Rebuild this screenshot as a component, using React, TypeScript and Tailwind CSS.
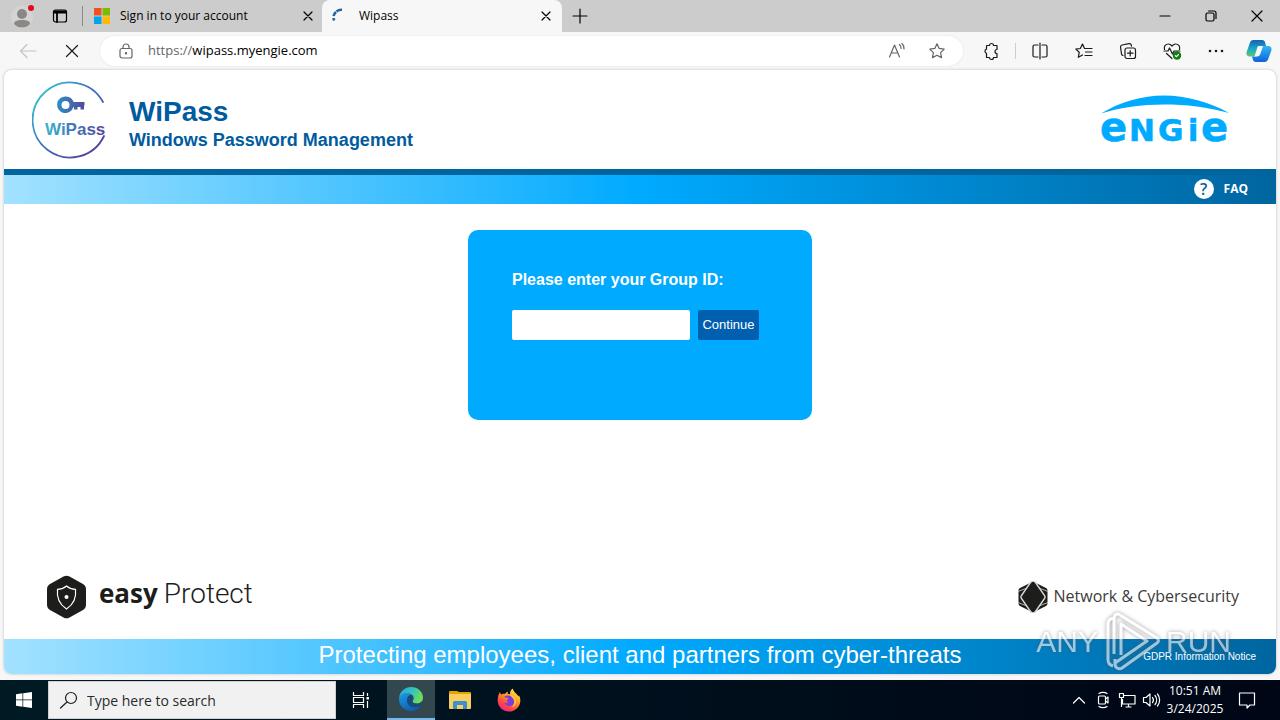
import React, { useState } from "react";

const chromeFont = "font-['Open_Sans',sans-serif]";

interface IconProps {
  size?: number;
  children: React.ReactNode;
}

// 20px line icon used in the browser toolbar
function LineIcon({ size = 20, children }: IconProps) {
  return (
    <svg
      width={size}
      height={size}
      viewBox="0 0 20 20"
      fill="none"
      stroke="currentColor"
      strokeWidth="1.2"
      strokeLinecap="round"
      strokeLinejoin="round"
    >
      {children}
    </svg>
  );
}

function CloseSvg({ size = 20 }: { size?: number }) {
  return (
    <LineIcon size={size}>
      <path d="M6 6l8 8M14 6l-8 8" />
    </LineIcon>
  );
}

function ProfileSvg() {
  return (
    <svg width="28" height="28" viewBox="0 0 28 28">
      <circle cx="14" cy="15" r="11" fill="#d6d4d2" />
      <circle cx="14" cy="12" r="5" fill="#8a8886" />
      <path d="M6 22c0-3 3-4 8-4s8 1 8 4c-2 2.500-5 3.500-8 3.500s-6-1-8-3.500z" fill="#8a8886" />
      <circle cx="23" cy="6" r="3" fill="#e00b1c" />
    </svg>
  );
}

function MicrosoftSvg() {
  return (
    <svg width="16" height="16" viewBox="0 0 16 16">
      <path d="M0 0h7.500v7.500H0z" fill="#f25022" />
      <path d="M8.500 0H16v7.500H8.500z" fill="#7fba00" />
      <path d="M0 8.500h7.500V16H0z" fill="#00a4ef" />
      <path d="M8.500 8.500H16V16H8.500z" fill="#ffb900" />
    </svg>
  );
}

function CopilotSvg() {
  return (
    <svg width="26" height="24" viewBox="0 0 26 24">
      <defs>
        <linearGradient id="cpA" x1="0" y1="0" x2="0" y2="1">
          <stop offset="0" stopColor="#1660b4" />
          <stop offset="0.500" stopColor="#18a5c9" />
          <stop offset="1" stopColor="#5cc878" />
        </linearGradient>
        <linearGradient id="cpB" x1="0" y1="0" x2="0" y2="1">
          <stop offset="0" stopColor="#33b6f2" />
          <stop offset="0.600" stopColor="#1b86ea" />
          <stop offset="1" stopColor="#0f62d8" />
        </linearGradient>
      </defs>
      <path d="M7.500 1h8.500c1.800 0 2.800 1 3.200 2.800L20 7h-3.500c-2 0-3 1-3.500 3l-2 5c-.6 1.800-1.500 2.500-3.500 2.500H4c-3.500 0-4-2.500-3.200-5L4 3.500C4.600 1.800 6 1 7.500 1z" fill="url(#cpA)" />
      <path d="M18.500 23H10c-1.800 0-2.800-1-3.200-2.800L6 17.500h2.500c2 0 3-1 3.500-2.500l2-5.500c.6-1.800 1.500-2.500 3.500-2.500H22c3.500 0 4 2.500 3.200 5L22 20.500c-.6 1.700-2 2.500-3.500 2.500z" fill="url(#cpB)" />
      <path d="M12.500 7h4.500l-2.500 7.500c-.7 2-1.500 3-3.500 3H8.500L11 9.500C11.300 8.200 11.700 7 12.500 7z" fill="#f7f7f7" />
    </svg>
  );
}

function TabStrip() {
  return (
    <div className="flex h-8 items-center bg-[#cccccc] text-black">
      <button aria-label="Profile" className="ml-2">
        <ProfileSvg />
      </button>
      <button aria-label="Tab actions" className="ml-3.5 mr-3">
        <LineIcon>
          <rect x="3.500" y="4" width="13" height="12" rx="2" />
          <path d="M4 5.500h12M4 6.500h12M7 7v9" strokeWidth="1.800" />
        </LineIcon>
      </button>
      <span className="h-5 w-px bg-[#8a8a8a]" />
      <div className="flex h-8 w-[239px] items-center pl-[11px] pr-1">
        <MicrosoftSvg />
        <span className="ml-2.5 flex-1 text-[12px]">Sign in to your account</span>
        <button aria-label="Close tab">
          <CloseSvg />
        </button>
      </div>
      <div className="flex h-8 w-60 items-center rounded-t-lg bg-[#f7f7f7] pl-[9px] pr-1.5">
        <svg width="16" height="16" viewBox="0 0 16 16" fill="none" stroke="#1d66a8" strokeWidth="2.600">
          <path d="M3.200 12.500a7 7 0 0 1-.6-2.500" />
          <path d="M2.600 8A7 7 0 0 1 5 4" />
          <path d="M5.500 3.500A8 8 0 0 1 11 1.800" />
        </svg>
        <span className="ml-3 flex-1 text-[12px]">Wipass</span>
        <button aria-label="Close tab">
          <CloseSvg />
        </button>
      </div>
      <button aria-label="New tab" className="ml-2">
        <LineIcon>
          <path d="M10 3v14M3 10h14" />
        </LineIcon>
      </button>
      <div className="ml-auto flex">
        <button aria-label="Minimize" className="flex w-[46px] justify-center">
          <LineIcon>
            <path d="M5 10h10" />
          </LineIcon>
        </button>
        <button aria-label="Restore" className="flex w-[46px] justify-center">
          <LineIcon>
            <rect x="5" y="7" width="8" height="8" rx="1.500" />
            <path d="M7.500 5h5.500a2 2 0 0 1 2 2v5.500" />
          </LineIcon>
        </button>
        <button aria-label="Close window" className="flex w-[46px] justify-center">
          <LineIcon>
            <path d="M5 5l10 10M15 5L5 15" />
          </LineIcon>
        </button>
      </div>
    </div>
  );
}

const starPath =
  "M10 2.800l2.200 4.600 5 .7-3.600 3.500.9 5-4.500-2.400-4.500 2.400.9-5L2.800 8.100l5-.7z";

function Toolbar() {
  return (
    <div className="flex h-[38px] items-center text-[#1a1a1a]">
      <button aria-label="Back" className="ml-[18px] text-[#c4c4c4]">
        <LineIcon>
          <path d="M18 10H2.500M9 3.500L2.500 10 9 16.500" />
        </LineIcon>
      </button>
      <button aria-label="Stop" className="ml-6">
        <LineIcon>
          <path d="M4.500 4.500l11 11M15.500 4.500l-11 11" />
        </LineIcon>
      </button>
      <div className="ml-[18px] flex h-[30px] flex-1 items-center rounded-full bg-white px-4 text-[#666666] shadow-[0_0_2px_#dddddd]">
        <LineIcon>
          <rect x="4" y="7.500" width="12" height="9.500" rx="2" />
          <path d="M7 7.500V6a3 3 0 0 1 6 0v1.500" />
          <circle cx="10" cy="12.200" r="0.600" fill="currentColor" />
        </LineIcon>
        <div role="textbox" aria-label="Address" className="ml-3 flex-1 text-[13px]">
          https://<span className="text-black">wipass.myengie.com</span>
        </div>
        <button aria-label="Read aloud" className="mr-5">
          <LineIcon>
            <path d="M2.500 16L7.500 4l5 12M4.200 12h6.600" />
            <path d="M12.500 3.500a5 5 0 0 1 1.500 4M15 2.500a7 7 0 0 1 2 5.500" />
          </LineIcon>
        </button>
        <button aria-label="Add to favorites">
          <LineIcon>
            <path d={starPath} />
          </LineIcon>
        </button>
      </div>
      <button aria-label="Extensions" className="ml-[18px]">
        <LineIcon>
          <path d="M6 4.500h2.500a2 2 0 0 1 4 0H16v4a2 2 0 0 0 0 4v4h-3.500a2 2 0 0 1-4 0H5.500v-4.200a2.200 2.200 0 0 1 0-4.200V5z" />
        </LineIcon>
      </button>
      <span className="ml-3.5 h-4 w-px bg-[#cccccc]" />
      <div className="ml-3.5 flex gap-6">
        <button aria-label="Split screen">
          <LineIcon>
            <path d="M8 4H4.500A1.500 1.500 0 0 0 3 5.500v9A1.500 1.500 0 0 0 4.500 16H8M12 4h3.500A1.500 1.500 0 0 1 17 5.500v9a1.500 1.500 0 0 1-1.500 1.500H12M10 2v16" />
          </LineIcon>
        </button>
        <button aria-label="Favorites">
          <LineIcon>
            <path d="M10.500 7.500L8.500 3 6.300 7.500l-4.500.6 3.400 3.200-.9 5L8.500 14M11 7.500h7M11.500 11H18M11 14.500h7" />
          </LineIcon>
        </button>
        <button aria-label="Collections">
          <LineIcon>
            <path d="M5 14.500a2 2 0 0 1-1.500-1.500l-1-7A2 2 0 0 1 4 4l7-1.300a2 2 0 0 1 2.300 1.500l.2 1" />
            <rect x="7" y="7" width="10.500" height="10.500" rx="2" />
            <path d="M12.200 9.500v5.500M9.500 12.200H15" />
          </LineIcon>
        </button>
        <button aria-label="Browser essentials">
          <LineIcon>
            <path d="M2.500 8.500C1.500 5 4 3 6.500 3 8.500 3 9.500 4.500 10 5c.5-.5 1.500-2 3.500-2C16 3 18.500 5 17.500 8.500M2 10h4l1.500-3 3 6L12 10h6M4.500 12.500L10 17.500" />
            <circle cx="15" cy="14.500" r="3.600" fill="#107c10" stroke="#107c10" />
            <path d="M13.400 14.700l1.100 1 2-2.200" stroke="#ffffff" />
          </LineIcon>
        </button>
        <button aria-label="Settings and more">
          <LineIcon>
            <g fill="currentColor" stroke="none">
              <circle cx="4" cy="10" r="1.300" />
              <circle cx="10" cy="10" r="1.300" />
              <circle cx="16" cy="10" r="1.300" />
            </g>
          </LineIcon>
        </button>
      </div>
      <button aria-label="Copilot" className="ml-5 mr-2">
        <CopilotSvg />
      </button>
    </div>
  );
}

function WiPassLogo() {
  return (
    <svg width="78" height="78" viewBox="0 0 78 78">
      <defs>
        <linearGradient id="wp" gradientUnits="userSpaceOnUse" x1="8" y1="8" x2="70" y2="60">
          <stop offset="0" stopColor="#35c3cf" />
          <stop offset="0.450" stopColor="#3f74c0" />
          <stop offset="1" stopColor="#52439a" />
        </linearGradient>
        <linearGradient id="wpKey" x1="0" y1="0" x2="1" y2="0">
          <stop offset="0" stopColor="#2a8fc4" />
          <stop offset="1" stopColor="#564a9c" />
        </linearGradient>
        <linearGradient id="wpText" x1="0" y1="0" x2="1" y2="0">
          <stop offset="0" stopColor="#38b6cf" />
          <stop offset="0.450" stopColor="#4079bd" />
          <stop offset="1" stopColor="#57479b" />
        </linearGradient>
      </defs>
      <path d="M71 21A37.500 37.500 0 1 0 72 55" fill="none" stroke="url(#wp)" strokeWidth="1.800" strokeLinecap="round" />
      <path
        fillRule="evenodd"
        fill="url(#wpKey)"
        d="M34 15.500a8.300 8.300 0 0 1 7.600 5.500H52.500v3.500h-.5v4h-3.500v-2.500h-3v2.500h-3.500v-2.500h-.6A8.300 8.300 0 1 1 34 15.500zM33.500 20a4 4 0 1 0 0 8 4 4 0 0 0 0-8z"
      />
      <text x="13" y="54" fill="url(#wpText)" fontSize="17" fontWeight="bold" fontFamily="Liberation Sans, sans-serif">
        WiPass
      </text>
    </svg>
  );
}

function EngieLogo() {
  return (
    <svg
      width="130"
      height="60"
      viewBox="0 -5 130 60"
      fill="#00aaff"
      className="overflow-visible"
    >
      <path d="M1 18.500C20 7 42 0.500 64 0.500s46 6.500 65 17.500C108 12 86 9.500 64 9.500S20 12.500 1 18.500z" />
      <text y="46" fontFamily="DejaVu Sans, sans-serif" fontWeight="bold" stroke="#00aaff" strokeWidth="0.600">
        <tspan x="0" fontSize="40">e</tspan>
        <tspan x="29" fontSize="31">N</tspan>
        <tspan x="58" fontSize="31">G</tspan>
        <tspan x="88" fontSize="30">i</tspan>
        <tspan x="101" fontSize="40">e</tspan>
      </text>
    </svg>
  );
}

function Header() {
  return (
    <header>
      <div className="flex h-[99px] items-center justify-between pl-7 pr-[46px]">
        <div className="flex items-center gap-[19px]">
          <WiPassLogo />
          <div className="pt-2 font-bold text-[#005b9f]">
            <h1 className="text-[28px] leading-8">WiPass</h1>
            <h2 className="text-[18px] leading-6">Windows Password Management</h2>
          </div>
        </div>
        <EngieLogo />
      </div>
      <nav className="flex h-[35px] items-center justify-end border-t-6 border-[#00659f] bg-linear-to-r/srgb from-[#a3e2ff] via-[#00aaff] to-[#00659f] pr-7 pb-0.5">
        <a href="#faq" className="flex items-center gap-2.5 font-['Open_Sans',sans-serif] text-[12px] font-bold text-white">
          <span className="flex size-5 items-center justify-center rounded-full bg-white text-[16px] leading-5 font-semibold text-[#00659f]">
            ?
          </span>
          FAQ
        </a>
      </nav>
    </header>
  );
}

function GroupForm() {
  const [groupId, setGroupId] = useState<string>("");

  return (
    <form
      onSubmit={(e) => e.preventDefault()}
      className="mx-auto mt-[26px] h-[190px] w-[344px] rounded-[10px] bg-[#00aaff] px-11 pt-10"
    >
      <label htmlFor="groupId" className="block text-[16px] leading-5 font-bold text-white">
        Please enter your Group ID:
      </label>
      <div className="mt-5 flex gap-2">
        <input
          id="groupId"
          type="text"
          value={groupId}
          onChange={(e) => setGroupId(e.target.value)}
          className="h-[30px] w-[178px] rounded-xs bg-white px-2 text-[13px] outline-none"
        />
        <button type="submit" className="h-[30px] w-[61px] rounded-xs bg-[#005fae] text-[13px] text-white">
          Continue
        </button>
      </div>
    </form>
  );
}

function Partners() {
  return (
    <div className="mt-auto mb-5 flex items-center justify-between pl-[42px] pr-[37px] text-[#1d1d1b]">
      <div className="flex items-center gap-3">
        <svg width="41" height="44" viewBox="0 0 41 44">
          <path d="M17.500 1.600a6 6 0 0 1 6 0l13.500 7.400a6 6 0 0 1 3 5.200v15.600a6 6 0 0 1-3 5.200l-13.500 7.400a6 6 0 0 1-6 0L4 35a6 6 0 0 1-3-5.200V14.200A6 6 0 0 1 4 9z" fill="#1d1d1b" />
          <path d="M20.500 11c2.500 2.200 5.500 3.200 9 3.400 1 8-2 15-9 19.600-7-4.600-10-11.600-9-19.600 3.500-.2 6.500-1.200 9-3.400z" fill="none" stroke="#ffffff" strokeWidth="1.200" />
          <circle cx="20.500" cy="22" r="2" fill="#ffffff" />
        </svg>
        <p className="flex items-baseline gap-1.5 pb-2 leading-8">
          <span className="font-['Open_Sans',sans-serif] text-[26px] font-bold">easy</span>
          <span className="font-['Roboto',sans-serif] text-[28px] font-light">Protect</span>
        </p>
      </div>
      <div className="flex items-center gap-1.5">
        <svg width="30" height="32" viewBox="0 0 30 32">
          <path d="M15 0.500L28 7a3 3 0 0 1 1.500 2.600v12.800A3 3 0 0 1 28 25l-13 6.500L2 25a3 3 0 0 1-1.500-2.600V9.600A3 3 0 0 1 2 7z" fill="#1d1d1b" />
          <path d="M13.500 0L3.500 14.500a2.500 2.500 0 0 0 0 3L13.500 32M16.500 0l10 14.500a2.500 2.500 0 0 1 0 3L16.500 32" fill="none" stroke="#d8d8d8" strokeWidth="1.400" />
          <path d="M0 10.500L9 7M30 10.500L21 7M0 21.500L9 25M30 21.500L21 25" stroke="#d8d8d8" strokeWidth="0.800" />
        </svg>
        <p className="pb-0.5 font-['Open_Sans',sans-serif] text-[16px] leading-6 text-[#3c3c3b]">
          Network &amp; Cybersecurity
        </p>
      </div>
    </div>
  );
}

// recorder watermark laid over the lower right corner
function Watermark() {
  return (
    <div className="pointer-events-none absolute right-[45px] bottom-0 flex items-center gap-1.5 text-[30px] leading-[48px] text-white opacity-60 drop-shadow-[0_0_2px_#555555]">
      <span>ANY</span>
      <svg width="56" height="64" viewBox="2 0 56 64" fill="none" stroke="#ffffff" strokeWidth="3" strokeLinejoin="round">
        <path d="M18 5l37 23c2 1.500 2 3.500 0 5L20 58c-3 2-7 0-7-4v-5" />
        <path d="M11 8c-3 1-5 3-5 6v36c0 3 2 5 5 6" />
        <path d="M12 44V10c0-6 3-7 6-5M19 45V14l26 17-32 22" />
      </svg>
      <span>RUN</span>
    </div>
  );
}

function Footer() {
  return (
    <footer className="relative grid h-[35px] grid-cols-[1fr_auto_1fr] items-center bg-linear-to-r/srgb from-[#a3e2ff] via-[#00aaff] to-[#00659f] pr-5 text-white">
      <p className="col-start-2 pb-1 pl-5 text-[24px] leading-7">
        Protecting employees, client and partners from cyber-threats
      </p>
      <a href="#gdpr" className="justify-self-end text-[10px]">
        GDPR Information Notice
      </a>
      <Watermark />
    </footer>
  );
}

function EdgeSvg() {
  return (
    <svg width="26" height="26" viewBox="0 0 26 26">
      <defs>
        <linearGradient id="edTop" x1="0" y1="0" x2="1" y2="0.400">
          <stop offset="0" stopColor="#2aa6dd" />
          <stop offset="0.550" stopColor="#35c1c0" />
          <stop offset="1" stopColor="#6ade5a" />
        </linearGradient>
        <linearGradient id="edBody" x1="0" y1="0" x2="0.600" y2="1">
          <stop offset="0" stopColor="#1d9be0" />
          <stop offset="1" stopColor="#0f5cb5" />
        </linearGradient>
      </defs>
      <path d="M1 12C2 5 7 1 13 1c7 0 12 5 12 10.500 0 4-3 6-6.500 6-2.500 0-4-1-4-2s1-1.500 1-3.500c0-2.500-2.500-4.500-6-4.500S2 9.500 1 12z" fill="url(#edTop)" />
      <path d="M1 12c1-3 4.500-5 8-5 2 0 3.500.6 4.600 1.600C10.500 9 9 11.500 9 14.500c0 4 3.500 6.800 8 6.800 2.500 0 4.500-.8 6-2C21 23 17.500 25 13.500 25 6 25 .5 19.500 1 12z" fill="url(#edBody)" />
      <path d="M9 14.500C9 11.500 10.500 9 13.600 8.600c1.200.9 1.900 2 1.900 3.400 0 2-1 2.500-1 3.500s1.500 2 4 2c2 0 3.500-.5 4.500-1.500l.5 2.500-.5.8c-1.500 1.200-3.500 2-6 2-4.500 0-8-2.800-8-6.800z" fill="#114a8b" opacity="0.700" />
    </svg>
  );
}

function ExplorerSvg() {
  return (
    <svg width="22" height="20" viewBox="0 0 22 20">
      <path d="M0 2a1 1 0 0 1 1-1h7l2 1h11a1 1 0 0 1 1 1v4H0z" fill="#e8a200" />
      <path d="M0 4h22v14a1 1 0 0 1-1 1H1a1 1 0 0 1-1-1z" fill="#f9cf60" />
      <path d="M4 19v-6.500A1.500 1.500 0 0 1 5.500 11h11a1.500 1.500 0 0 1 1.500 1.500V19h-4v-4H8v4z" fill="#3f8fd0" />
    </svg>
  );
}

function FirefoxSvg() {
  return (
    <svg width="24" height="24" viewBox="0 0 24 24">
      <defs>
        <linearGradient id="ff" x1="0.800" y1="0" x2="0.200" y2="1">
          <stop offset="0" stopColor="#fff24a" />
          <stop offset="0.400" stopColor="#ff9a25" />
          <stop offset="0.700" stopColor="#ff4a41" />
          <stop offset="1" stopColor="#e6208f" />
        </linearGradient>
      </defs>
      <path d="M3 4c.2 1.200.6 2 1.200 2.500C5.500 5.500 7 5.500 8 6c.6-1 1.600-2 3-2.200-.5.8-.5 1.500-.2 2 .8.200 1.700.3 2.400.8C12.500 4 14 1.500 16 .500c-.2 3 4 5 5.500 8 .4-.6.400-1 .3-1.600 1.200 2 1.700 4 1.500 6C23 19 18 23.500 12 23.500S.700 19 .700 12.500C.700 9 1.500 6 3 4z" fill="url(#ff)" />
      <path d="M7 9c1.500-1.500 4-2 6.500-1 3 1 4.500 3.500 4 6-.5 3-3.500 4.500-6 4-2-.3-3.700-1.600-4-3.500 1.300.8 3 .6 4-.4-1.500-.4-2-1.300-1.800-2.200.7-.5 1.600-.4 1.700-1.200C11 9.600 8.500 10 7 9z" fill="#7a3ddb" />
      <path d="M13 6.500c4 .8 6.500 4 6 8-.4 2.500-2 4.500-4.500 5.300 3-3 4-7.500.5-10.300z" fill="#ffc23a" />
    </svg>
  );
}

function Taskbar() {
  const [query, setQuery] = useState<string>("");

  return (
    <div className="flex h-10 items-center bg-linear-to-r from-[#001a24] to-[#000616] text-white">
      <button aria-label="Start" className="flex w-12 justify-center">
        <svg width="16" height="16" viewBox="0 0 16 16" fill="#ffffff">
          <path d="M0 2.200l6.500-.9v6.300H0zM7.200 1.200L16 0v7.600H7.200zM0 8.300h6.500v6.400L0 13.800zM7.200 8.300H16V16l-8.800-1.200z" />
        </svg>
      </button>
      <div className="flex h-[38px] w-72 items-center gap-2 border border-[#d0d0d0] bg-[#f1f1f1] px-2.5 text-[#1f1f1f]">
        <LineIcon>
          <circle cx="12" cy="8" r="5.500" />
          <path d="M8 12l-6.500 6" />
        </LineIcon>
        <input
          type="text"
          aria-label="Search"
          placeholder="Type here to search"
          value={query}
          onChange={(e) => setQuery(e.target.value)}
          className="w-full flex-1 text-[14px] outline-none placeholder:text-[#2b2b2b]"
        />
      </div>
      <button aria-label="Task view" className="flex w-[51px] justify-center">
        <LineIcon>
          <path d="M1.500 2v3.500h10V2M1.500 18v-3.500h10V18M1.500 7.500h10v5h-10zM15.500 3v3M15.500 11V18" strokeLinecap="butt" />
          <path d="M14.500 7H17v2.500h-2.500z" fill="currentColor" stroke="none" />
        </LineIcon>
      </button>
      <button aria-label="Microsoft Edge" className="flex h-10 w-12 items-center justify-center border-b-2 border-[#76b9ed] bg-[#33474f]">
        <EdgeSvg />
      </button>
      <button aria-label="File Explorer" className="flex w-[49px] justify-center">
        <ExplorerSvg />
      </button>
      <button aria-label="Firefox" className="flex w-[49px] justify-center">
        <FirefoxSvg />
      </button>
      <div className="ml-auto flex items-center gap-1">
        <button aria-label="Show hidden icons">
          <LineIcon>
            <path d="M4.500 13L10 7.500l5.500 5.500" />
          </LineIcon>
        </button>
        <button aria-label="Meet now">
          <LineIcon>
            <path d="M6 3.500C8 2 12 2 14 3.500M6 16.500c2 1.500 6 1.500 8 0" />
            <rect x="5.500" y="6" width="7" height="8" rx="1" />
            <path d="M12.500 9l2.500-2v6l-2.500-2" />
          </LineIcon>
        </button>
        <button aria-label="Network">
          <LineIcon>
            <path d="M7 5.500h11v8.500H5.500V9M11.500 14v3M8.500 17h6M2.500 3.500h4v4h-4zM4.500 7.500V17" strokeLinecap="butt" />
          </LineIcon>
        </button>
        <button aria-label="Volume">
          <LineIcon>
            <path d="M2.500 7.500H5l4-3.500v12l-4-3.500H2.500zM11.500 7.500a4 4 0 0 1 0 5M14 5.500a7 7 0 0 1 0 9M16.500 4a9.500 9.500 0 0 1 0 12" />
          </LineIcon>
        </button>
      </div>
      <div className="w-[68px] text-center text-[12px] leading-[18px]">
        <p>10:51 AM</p>
        <p>3/24/2025</p>
      </div>
      <button aria-label="Notifications" className="mr-[23px] ml-2">
        <LineIcon>
          <path d="M2.500 3h15v12H13l-3 3v-3H2.500z" />
        </LineIcon>
      </button>
    </div>
  );
}

export default function App() {
  return (
    <div className={`flex min-h-screen flex-col bg-[#f7f7f7] ${chromeFont}`}>
      <TabStrip />
      <Toolbar />
      <main className="mx-1 mb-1.5 flex flex-1 flex-col overflow-hidden rounded-lg bg-white font-['Liberation_Sans',Arial,sans-serif] shadow-[0_0_3px_#bbbbbb]">
        <Header />
        <GroupForm />
        <Partners />
        <Footer />
      </main>
      <Taskbar />
    </div>
  );
}
